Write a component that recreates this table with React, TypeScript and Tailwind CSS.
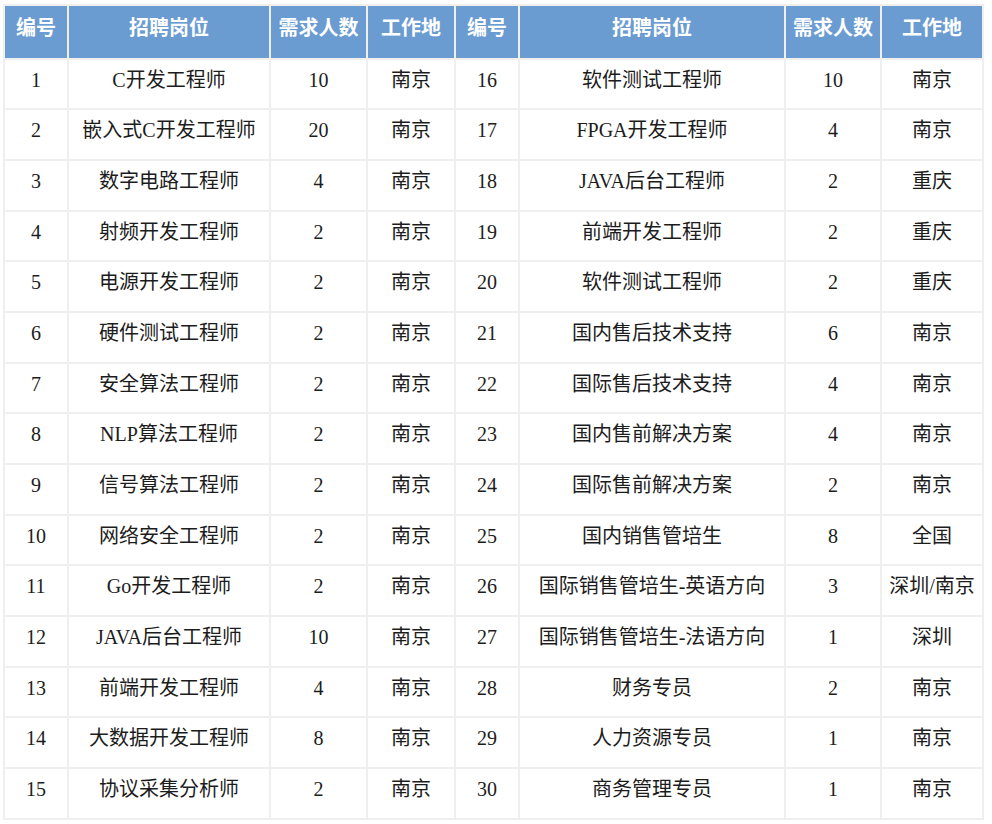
const left = [
  ['1', 'C开发工程师', '10', '南京'],
  ['2', '嵌入式C开发工程师', '20', '南京'],
  ['3', '数字电路工程师', '4', '南京'],
  ['4', '射频开发工程师', '2', '南京'],
  ['5', '电源开发工程师', '2', '南京'],
  ['6', '硬件测试工程师', '2', '南京'],
  ['7', '安全算法工程师', '2', '南京'],
  ['8', 'NLP算法工程师', '2', '南京'],
  ['9', '信号算法工程师', '2', '南京'],
  ['10', '网络安全工程师', '2', '南京'],
  ['11', 'Go开发工程师', '2', '南京'],
  ['12', 'JAVA后台工程师', '10', '南京'],
  ['13', '前端开发工程师', '4', '南京'],
  ['14', '大数据开发工程师', '8', '南京'],
  ['15', '协议采集分析师', '2', '南京'],
];

const right = [
  ['16', '软件测试工程师', '10', '南京'],
  ['17', 'FPGA开发工程师', '4', '南京'],
  ['18', 'JAVA后台工程师', '2', '重庆'],
  ['19', '前端开发工程师', '2', '重庆'],
  ['20', '软件测试工程师', '2', '重庆'],
  ['21', '国内售后技术支持', '6', '南京'],
  ['22', '国际售后技术支持', '4', '南京'],
  ['23', '国内售前解决方案', '4', '南京'],
  ['24', '国际售前解决方案', '2', '南京'],
  ['25', '国内销售管培生', '8', '全国'],
  ['26', '国际销售管培生-英语方向', '3', '深圳/南京'],
  ['27', '国际销售管培生-法语方向', '1', '深圳'],
  ['28', '财务专员', '2', '南京'],
  ['29', '人力资源专员', '1', '南京'],
  ['30', '商务管理专员', '1', '南京'],
];

const headers = ['编号', '招聘岗位', '需求人数', '工作地', '编号', '招聘岗位', '需求人数', '工作地'];
const widths = ['w-[62px]', 'w-[200px]', 'w-[95px]', 'w-[86px]', 'w-[62px]', 'w-[264px]', 'w-[94px]', 'w-[100px]'];

export default function App() {
  return (
    <div className="min-h-[824px] bg-white pl-[3px] pt-[4px] font-['Liberation_Serif','Noto_Sans_CJK_SC',serif]">
      <table className="table-fixed border-separate border-spacing-[2px] bg-[#efefef] text-[20px] text-[#1c1c1c]">
        <thead>
          <tr className="h-[51.5px]">
            {headers.map((h, i) => (
              <th
                key={i}
                className={`${widths[i]} bg-[#6a9bd1] p-0 pt-[7px] align-top text-center font-['Noto_Sans_CJK_SC',sans-serif] text-[20px] leading-[28px] font-bold text-white`}
              >
                {h}
              </th>
            ))}
          </tr>
        </thead>
        <tbody>
          {left.map((row, r) => {
            const cells = [...row, ...right[r]];
            return (
              <tr key={r} className="h-[48.7px]">
                {cells.map((c, i) => (
                  <td key={i} className="bg-white p-0 pt-[6px] align-top text-center leading-[28px] whitespace-nowrap">
                    {c}
                  </td>
                ))}
              </tr>
            );
          })}
        </tbody>
      </table>
    </div>
  );
}
